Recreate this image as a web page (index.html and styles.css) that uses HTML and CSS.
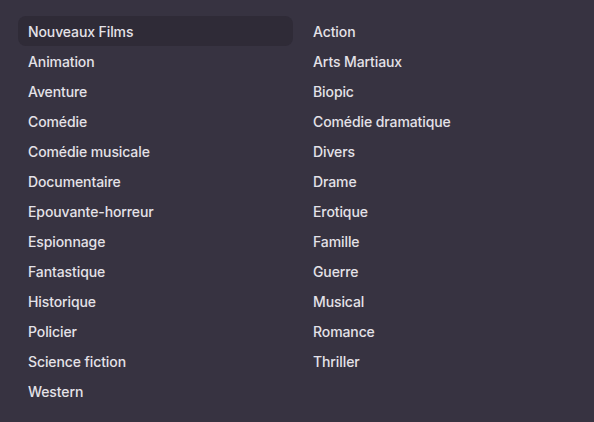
FILE: index.html
```html
<!DOCTYPE html>
<html lang="fr">
<head>
<meta charset="utf-8">
<title>Genres</title>
<link rel="stylesheet" href="styles.css">
</head>
<body>
<nav class="menu">
  <ul class="col">
    <li class="item active">Nouveaux Films</li>
    <li class="item">Animation</li>
    <li class="item">Aventure</li>
    <li class="item">Comédie</li>
    <li class="item">Comédie musicale</li>
    <li class="item">Documentaire</li>
    <li class="item">Epouvante-horreur</li>
    <li class="item">Espionnage</li>
    <li class="item">Fantastique</li>
    <li class="item">Historique</li>
    <li class="item">Policier</li>
    <li class="item">Science fiction</li>
    <li class="item">Western</li>
  </ul>
  <ul class="col">
    <li class="item">Action</li>
    <li class="item">Arts Martiaux</li>
    <li class="item">Biopic</li>
    <li class="item">Comédie dramatique</li>
    <li class="item">Divers</li>
    <li class="item">Drame</li>
    <li class="item">Erotique</li>
    <li class="item">Famille</li>
    <li class="item">Guerre</li>
    <li class="item">Musical</li>
    <li class="item">Romance</li>
    <li class="item">Thriller</li>
  </ul>
</nav>
</body>
</html>
```
FILE: styles.css
```css
html, body {
  margin: 0;
  padding: 0;
  background: #373341;
  height: 100%;
}
body {
  font-family: Inter, "Noto Sans", sans-serif;
  font-size: 14px;
  font-weight: 500;
  letter-spacing: -0.1px;
  color: #e4e2e8;
}
.menu {
  display: grid;
  grid-template-columns: 275px 275px;
  column-gap: 10px;
  padding: 16px 16px 16px 18px;
}
.col {
  list-style: none;
  margin: 0;
  padding: 0;
  display: flex;
  flex-direction: column;
}
.item {
  height: 30px;
  box-sizing: border-box;
  padding: 7px 10px 0 10px;
  line-height: 17px;
  border-radius: 8px;
  white-space: nowrap;
}
.item.active {
  background: #2f2b37;
}
```
